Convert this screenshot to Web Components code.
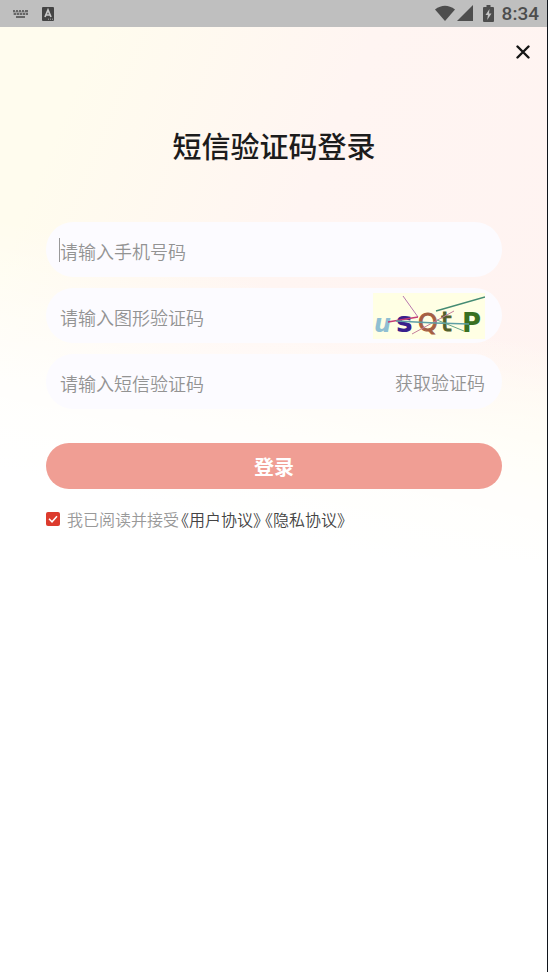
<!DOCTYPE html>
<html lang="zh-CN">
<head>
<meta charset="utf-8">
<meta name="viewport" content="width=device-width, initial-scale=1">
<title>短信验证码登录</title>
<style>
html, body { margin: 0; min-height: 100%; }
body { background: #fff; font-family: "Noto Sans CJK SC", "Noto Sans", sans-serif; color: #1c1c1c; }
</style>
</head>
<body>
<login-page></login-page>
<script>
const define = (name, html, setup) => {
  const template = document.createElement('template');
  template.innerHTML = html;
  customElements.define(name, class extends HTMLElement {
    constructor() {
      super();
      const root = this.attachShadow({ mode: 'open' });
      root.append(template.content.cloneNode(true));
    }
    connectedCallback() { if (setup) setup(this, this.shadowRoot); }
  });
};

define('status-bar', `
<style>
:host { display: flex; align-items: center; justify-content: space-between; height: 27px; padding: 0 8px 0 12px; background: #bfbfbf; color: #4d4d4d; }
.group { display: flex; align-items: center; }
.left { gap: 12px; }
svg { display: block; }
.battery { margin: 0 8px 0 9px; }
time { font: 500 19px/27px Roboto, sans-serif; }
</style>
<div class="group left">
  <svg width="17" height="10" viewBox="0 0 17 10" fill="#666"><path d="M1 1h2v2H1zM4 1h2v2H4zM7 1h2v2H7zM10 1h2v2h-2zM13 1h3v2h-3zM2 4h2v2H2zM5 4h2v2H5zM8 4h2v2H8zM11 4h2v2h-2zM14 4h2v2h-2zM4 7h9v2H4z"/><path d="M1 2h15v4H1z" opacity=".35"/></svg>
  <svg width="14" height="14" viewBox="0 0 14 14"><rect x="1" width="12" height="14" rx="1" fill="#444"/><path d="M4 10 7 3l3 7M5 8h4" fill="none" stroke="#c8c8c8" stroke-width="1.7"/><path d="M7 12.2h5" stroke="#aaa" stroke-dasharray="1 1"/></svg>
</div>
<div class="group">
  <svg width="20" height="17" viewBox="0 0 20 17" fill="#4d4d4d"><path d="M0 4.500Q10-3 20 4.500L10 16z"/></svg>
  <svg width="19" height="17" viewBox="0 0 19 17" fill="#4d4d4d"><path d="M18 0v16H2z"/></svg>
  <svg class="battery" width="11" height="17" viewBox="0 0 11 17"><path d="M3.500 0h4v2H10q1 0 1 1v13q0 1-1 1H1q-1 0-1-1V3q0-1 1-1h2.500z" fill="#4d4d4d"/><path d="M6.500 4 2.500 10h2.400L4.200 15 8.500 8.500H6z" fill="#c4c4c4"/></svg>
  <time>8:34</time>
</div>`);

define('close-button', `
<style>
:host { display: flex; justify-content: flex-end; padding: 13px 12px 0 0; }
button { display: grid; place-items: center; width: 24px; height: 24px; padding: 0; border: 0; background: none; cursor: pointer; }
</style>
<button type="button" aria-label="关闭"><svg width="14" height="14" viewBox="0 0 14 14"><path d="M1.500 1.500l11 11M12.500 1.500l-11 11" stroke="#151515" stroke-width="2.400" stroke-linecap="round"/></svg></button>`);

define('captcha-image', `
<style>
:host { display: block; }
button { display: block; padding: 0; border: 0; cursor: pointer; }
svg { display: block; }
text { font-family: "DejaVu Sans", sans-serif; font-weight: 700; }
.thin { font-weight: 400; }
</style>
<button type="button" aria-label="刷新图形验证码">
<svg width="112" height="46" viewBox="0 0 112 46">
  <rect width="112" height="46" fill="#ffffe4"/>
  <text x="1" y="39" font-size="24" font-style="italic" fill="#8fbfd2">u</text>
  <text x="23" y="39" font-size="28" fill="#38208c">s</text>
  <text x="45" y="38" font-size="25" class="thin" fill="#a55f43" stroke="#a55f43">Q</text>
  <text x="68" y="38" font-size="27" class="thin" fill="#52602a" stroke="#52602a">t</text>
  <text x="89" y="39" font-size="26" fill="#397022">P</text>
  <g fill="none" stroke-width="1">
    <path d="M30 3 45 24" stroke="#b878ae"/>
    <path d="M15 29 45 24" stroke="#c33c76" stroke-width="1.300"/>
    <path d="M39 41 81 18" stroke="#c47e9c"/>
    <path d="M23 28 62 30 96 31" stroke="#5d9fa5" stroke-width="1.300"/>
    <path d="M64 27 91 38" stroke="#65a58b"/>
    <path d="M63 18 112 4" stroke="#448b73" stroke-width="1.400"/>
  </g>
</svg></button>`);

define('text-field', `
<style>
:host { display: flex; align-items: center; height: 55px; padding: 0 17px 0 13px; border-radius: 28px; background: #fcfbff; }
.entry { display: flex; flex: 1; min-width: 0; border-left: 1px solid transparent; }
:host([active]) .entry { border-color: #999; }
input { flex: 1; min-width: 0; height: 22px; padding: 2px 0 0; border: 0; outline: 0; background: none; color: #333; font: 350 18px/22px "Noto Sans CJK SC", sans-serif; }
input::placeholder { color: #939393; opacity: 1; }
</style>
<div class="entry"><input></div><slot></slot>`, (host, root) => {
  const input = root.querySelector('input');
  input.type = host.getAttribute('type') || 'text';
  input.placeholder = host.getAttribute('label');
  input.setAttribute('aria-label', input.placeholder);
});

define('code-button', `
<style>
:host { display: block; }
button { padding: 2px 0 0; border: 0; background: none; color: #939393; font: 350 18px/22px "Noto Sans CJK SC", sans-serif; cursor: pointer; }
</style>
<button type="button"><slot></slot></button>`);

define('submit-button', `
<style>
:host { display: block; }
button { display: block; width: 100%; height: 46px; padding: 2px 0 0; border: 0; border-radius: 23px; background: #f09e94; color: #fff; font: 700 20px/44px "Noto Sans CJK SC", sans-serif; cursor: pointer; }
</style>
<button type="button"><slot></slot></button>`);

define('agreement-row', `
<style>
:host { display: flex; align-items: center; font-size: 16px; line-height: 24px; font-weight: 350; color: #999; }
input { appearance: none; flex: none; width: 14px; height: 14px; margin: 0 7px 0 0; border-radius: 2px; background: #dc3b2d; }
input:checked { background: #dc3b2d url("data:image/svg+xml,%3Csvg xmlns='http://www.w3.org/2000/svg' viewBox='0 0 14 14'%3E%3Cpath d='M3 6.800l3 3 5-5.600' fill='none' stroke='white' stroke-width='1.500'/%3E%3C/svg%3E"); }
.links { display: flex; gap: 4px; margin-left: 2px; }
a { color: #444; text-decoration: none; font-feature-settings: "halt"; }
</style>
<input type="checkbox" id="agree" checked><label for="agree">我已阅读并接受</label>
<span class="links"><a href="#terms">《用户协议》</a><a href="#privacy">《隐私协议》</a></span>`);

define('login-page', `
<style>
:host { display: block; box-sizing: border-box; min-height: 100vh; border-right: 1px solid #10151c;
  background: linear-gradient(193deg, #fff0 50%, #fffc 74%, #fff 87%) 0 0 / 100% 560px no-repeat,
    linear-gradient(180deg, #fffcf000 60%, #fffcf0 78%) 0 0 / 100% 560px no-repeat,
    linear-gradient(112deg, #fffcee 14%, #fff5f2 50%, #fff3f1 100%) 0 0 / 100% 560px no-repeat, #fff; }
main { padding: 0 45px 0 46px; }
h1 { margin: 59px 0 55px; text-align: center; font-size: 29px; line-height: 44px; font-weight: 500; }
.fields { display: grid; gap: 11px; }
submit-button { margin-top: 34px; }
agreement-row { margin-top: 18px; }
</style>
<status-bar></status-bar>
<close-button></close-button>
<main>
  <h1>短信验证码登录</h1>
  <div class="fields">
    <text-field active type="tel" label="请输入手机号码"></text-field>
    <text-field label="请输入图形验证码"><captcha-image></captcha-image></text-field>
    <text-field label="请输入短信验证码"><code-button>获取验证码</code-button></text-field>
  </div>
  <submit-button>登录</submit-button>
  <agreement-row></agreement-row>
</main>`);
</script>
</body>
</html>
